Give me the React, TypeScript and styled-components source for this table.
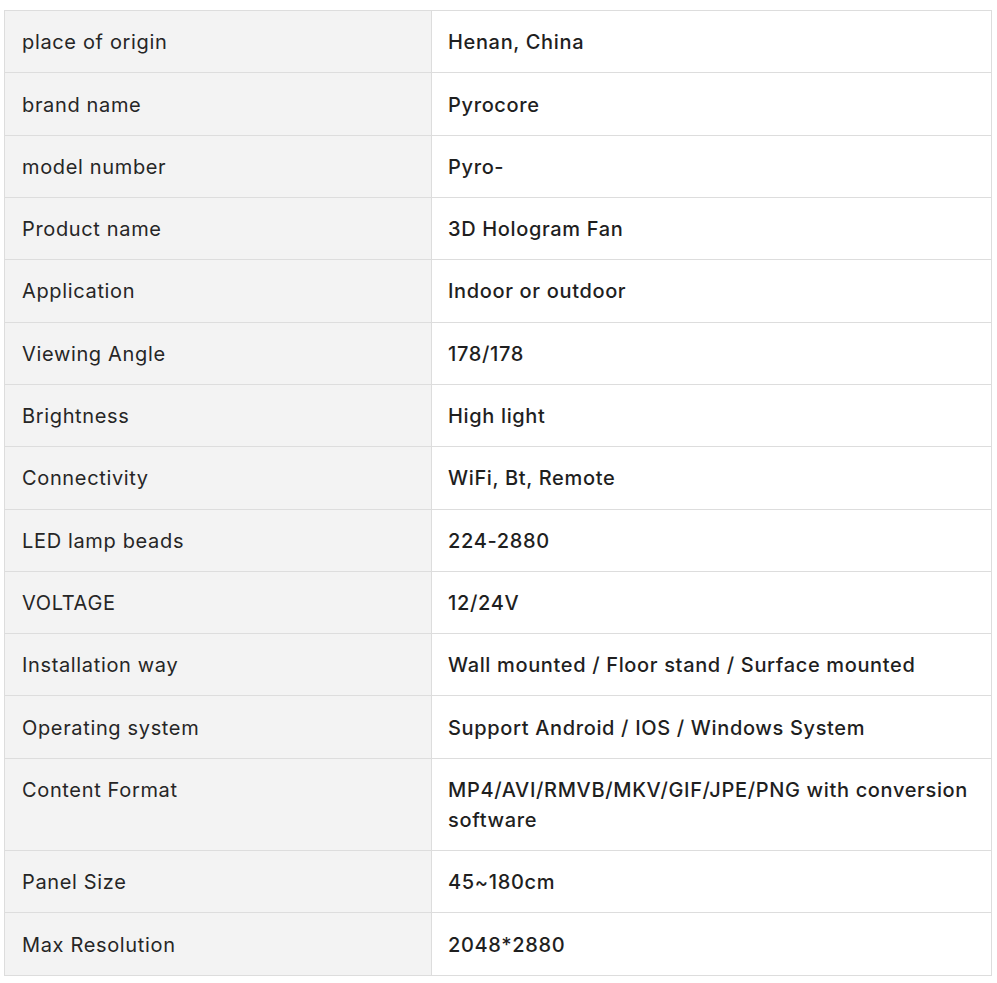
import React from "react";
import styled, { createGlobalStyle } from "styled-components";

const GlobalStyle = createGlobalStyle`
  html, body { margin: 0; padding: 0; background: #ffffff; }
  body { font-family: Inter, "Noto Sans", Arial, sans-serif; }
`;

const Page = styled.div`
  padding: 10px 5px 8px 4px;
`;

const SpecTable = styled.table`
  width: 988px;
  border-collapse: collapse;
  table-layout: fixed;
  font-family: Inter, "Noto Sans", Arial, sans-serif;
  font-size: 20px;
  letter-spacing: 0.65px;
  line-height: 30px;
  color: #222222;
  border: 1px solid #dddddd;
`;

const Cell = styled.td<{ $label?: boolean }>`
  border: 1px solid #dddddd;
  padding: 16.2px 16px 15.13px ${(p) => (p.$label ? "17px" : "16px")};
  vertical-align: top;
  background: ${(p) => (p.$label ? "#f3f3f3" : "#ffffff")};
  font-weight: ${(p) => (p.$label ? 400 : 500)};
  color: ${(p) => (p.$label ? "#262626" : "#1f1f1f")};
`;

const rows: [string, string][] = [
  ["place of origin", "Henan, China"],
  ["brand name", "Pyrocore"],
  ["model number", "Pyro-"],
  ["Product name", "3D Hologram Fan"],
  ["Application", "Indoor or outdoor"],
  ["Viewing Angle", "178/178"],
  ["Brightness", "High light"],
  ["Connectivity", "WiFi, Bt, Remote"],
  ["LED lamp beads", "224-2880"],
  ["VOLTAGE", "12/24V"],
  ["Installation way", "Wall mounted / Floor stand / Surface mounted"],
  ["Operating system", "Support Android / IOS / Windows System"],
  ["Content Format", "MP4/AVI/RMVB/MKV/GIF/JPE/PNG with conversion software"],
  ["Panel Size", "45~180cm"],
  ["Max Resolution", "2048*2880"],
];

export default function App() {
  return (
    <Page>
      <GlobalStyle />
      <SpecTable>
        <colgroup>
          <col style={{ width: "427px" }} />
          <col />
        </colgroup>
        <tbody>
          {rows.map(([k, v]) => (
            <tr key={k}>
              <Cell $label>{k}</Cell>
              <Cell>{v}</Cell>
            </tr>
          ))}
        </tbody>
      </SpecTable>
    </Page>
  );
}
